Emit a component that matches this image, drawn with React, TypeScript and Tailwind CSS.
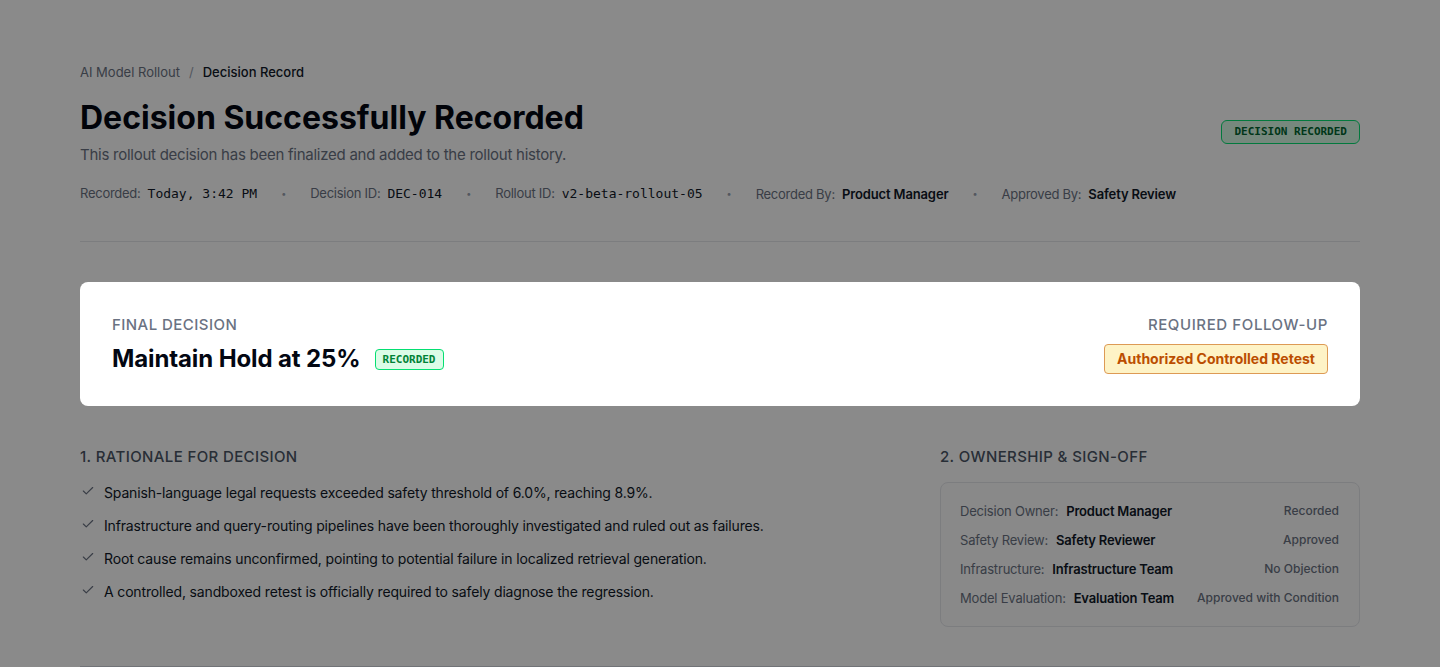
import { Check } from "lucide-react";

const sans = "font-['Inter','Liberation_Sans',sans-serif]";
const mono = "font-['DejaVu_Sans_Mono','Liberation_Mono',monospace]";

const rationale = [
  "Spanish-language legal requests exceeded safety threshold of 6.0%, reaching 8.9%.",
  "Infrastructure and query-routing pipelines have been thoroughly investigated and ruled out as failures.",
  "Root cause remains unconfirmed, pointing to potential failure in localized retrieval generation.",
  "A controlled, sandboxed retest is officially required to safely diagnose the regression.",
];

const owners = [
  { role: "Decision Owner:", who: "Product Manager", status: "Recorded" },
  { role: "Safety Review:", who: "Safety Reviewer", status: "Approved" },
  { role: "Infrastructure:", who: "Infrastructure Team", status: "No Objection" },
  { role: "Model Evaluation:", who: "Evaluation Team", status: "Approved with Condition" },
];

function Dot() {
  return <span className="text-[9px] text-gray-400">•</span>;
}

function Meta({ label, value, code }: { label: string; value: string; code?: boolean }) {
  return (
    <span className="flex items-baseline gap-[7px]">
      <span className="tracking-[-0.02em] text-gray-500">{label}</span>
      <span
        className={
          code ? `${mono} text-[13px] text-gray-900` : "font-semibold tracking-[-0.01em] text-gray-900"
        }
      >
        {value}
      </span>
    </span>
  );
}

export default function App() {
  return (
    <div className={`${sans} relative min-h-[667px] overflow-hidden bg-white text-gray-900`}>
      <main className="px-20 pt-[62px]">
        <nav className="flex items-center gap-[9px] text-[13px] leading-5">
          <span className="text-gray-500">AI Model Rollout</span>
          <span className="text-gray-400">/</span>
          <span className="font-medium text-gray-900">Decision Record</span>
        </nav>

        <div className="mt-4 flex items-center justify-between">
          <div>
            <h1 className="text-[32px] font-bold leading-10 text-gray-950">Decision Successfully Recorded</h1>
            <p className="mt-1.5 text-[15px] leading-[22px] tracking-[-0.017em] text-gray-500">
              This rollout decision has been finalized and added to the rollout history.
            </p>
          </div>
          <span
            className={`${mono} rounded-md border border-green-400 bg-green-100 px-3 py-[3px] text-[11px] font-semibold leading-4 text-green-800`}
          >
            DECISION RECORDED
          </span>
        </div>

        <div className="mt-[17px] flex items-center gap-6 border-b border-gray-200 pb-[37px] text-[13px] leading-5">
          <Meta label="Recorded:" value="Today, 3:42 PM" code />
          <Dot />
          <Meta label="Decision ID:" value="DEC-014" code />
          <Dot />
          <Meta label="Rollout ID:" value="v2-beta-rollout-05" code />
          <Dot />
          <Meta label="Recorded By:" value="Product Manager" />
          <Dot />
          <Meta label="Approved By:" value="Safety Review" />
        </div>

        {/* Highlighted summary card, raised above the dimming layer */}
        <section className="relative z-20 mt-10 flex items-start justify-between rounded-lg bg-white px-8 pb-8 pt-[33px]">
          <div>
            <div className="text-[15px] font-medium leading-5 tracking-[0.03em] text-gray-500">FINAL DECISION</div>
            <div className="mt-[10px] flex items-center gap-[14px]">
              <span className="text-[24px] font-bold leading-7 tracking-[-0.005em] text-gray-950">
                Maintain Hold at 25%
              </span>
              <span
                className={`${mono} rounded-[4px] border border-green-400 bg-green-100 px-[7px] py-[1px] text-[11px] font-bold leading-[17px] text-green-700`}
              >
                RECORDED
              </span>
            </div>
          </div>
          <div className="flex flex-col items-end">
            <div className="text-[15px] font-medium leading-5 tracking-[0.04em] text-gray-500">REQUIRED FOLLOW-UP</div>
            <span className="mt-[9px] rounded-[4px] border border-[#dd9a55] bg-amber-100 px-3 py-[4px] text-[14px] font-bold leading-5 text-amber-700">
              Authorized Controlled Retest
            </span>
          </div>
        </section>

        <div className="mt-[41px] grid grid-cols-[1fr_420px] gap-[60px]">
          <section>
            <h2 className="text-[15px] font-medium leading-5 tracking-[0.025em] text-gray-600">
              1. RATIONALE FOR DECISION
            </h2>
            <ul className="mt-4 flex flex-col gap-[13px]">
              {rationale.map((r) => (
                <li
                  key={r}
                  className="flex items-start gap-[10px] text-[14px] leading-5 tracking-[-0.011em] text-gray-900"
                >
                  <Check size={14} strokeWidth={2} className="mt-[1px] shrink-0 translate-x-[1px] text-gray-500" />
                  <span>{r}</span>
                </li>
              ))}
            </ul>
          </section>

          <section>
            <h2 className="text-[15px] font-medium leading-5 tracking-[0.025em] text-gray-600">
              2. OWNERSHIP &amp; SIGN-OFF
            </h2>
            <div className="mt-[15px] flex flex-col gap-[9px] rounded-lg border border-gray-200 bg-gray-50/40 py-[18px] pl-[19px] pr-5">
              {owners.map((o) => (
                <div key={o.role} className="flex items-center justify-between leading-5">
                  <div className="flex items-baseline gap-[8px] text-[13px] tracking-[-0.015em]">
                    <span className="text-gray-500">{o.role}</span>
                    <span className="font-semibold text-gray-900">{o.who}</span>
                  </div>
                  <span className="text-[12px] font-medium text-gray-500">{o.status}</span>
                </div>
              ))}
            </div>
          </section>
        </div>

        <div className="mt-[39px] border-t border-gray-300 pt-10" />
      </main>

      {/* Dimming layer over the page */}
      <div className="pointer-events-none absolute inset-0 z-10 bg-black/[0.46]" />
    </div>
  );
}
